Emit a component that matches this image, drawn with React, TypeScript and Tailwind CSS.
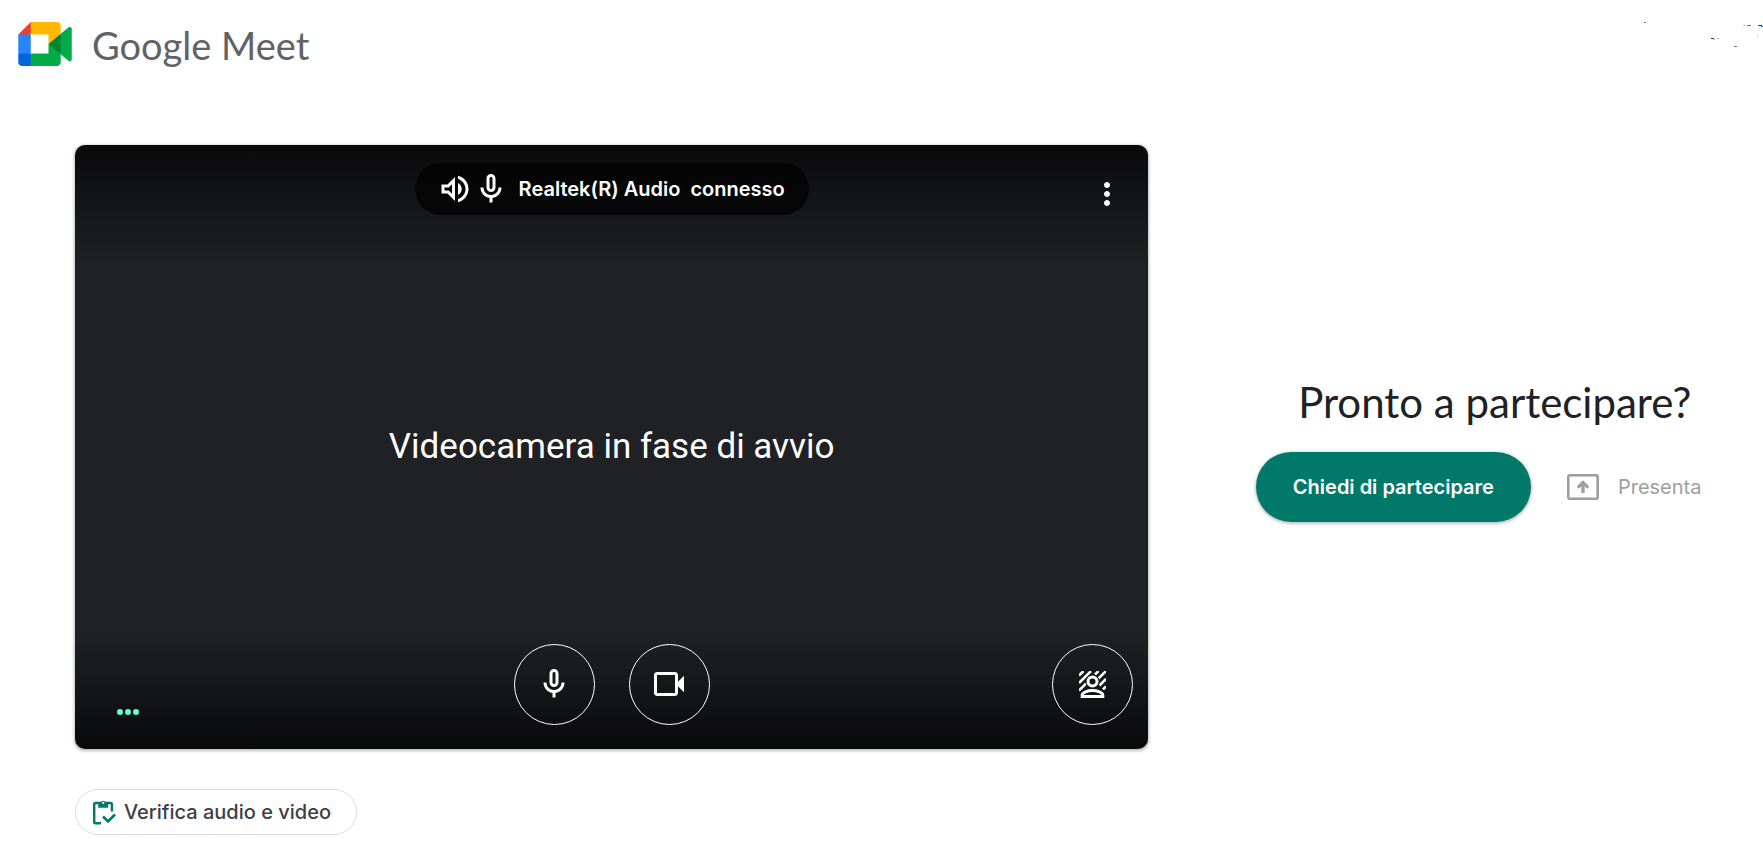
import React from "react";

const MIC =
  "M12 14c1.66 0 3-1.34 3-3V5c0-1.66-1.34-3-3-3S9 3.34 9 5v6c0 1.66 1.34 3 3 3zm-1-9c0-.55.45-1 1-1s1 .45 1 1v6c0 .55-.45 1-1 1s-1-.45-1-1V5zm6 6c0 2.76-2.24 5-5 5s-5-2.24-5-5H5c0 3.53 2.61 6.43 6 6.92V21h2v-3.08c3.39-.49 6-3.39 6-6.92h-2z";
const SPEAKER =
  "M3 9v6h4l5 5V4L7 9H3zm7-.17v6.34L7.83 13H5v-2h2.83L10 8.83zM16.5 12c0-1.77-1.02-3.29-2.5-4.03v8.05c1.48-.73 2.5-2.25 2.5-4.02zM14 3.23v2.06c2.89.86 5 3.54 5 6.71s-2.11 5.85-5 6.71v2.06c4.01-.91 7-4.49 7-8.77s-2.99-7.86-7-8.77z";
const CAMERA =
  "M18 10.48V6c0-1.1-.9-2-2-2H4c-1.1 0-2 .9-2 2v12c0 1.1.9 2 2 2h12c1.1 0 2-.9 2-2v-4.48l4 3.98v-11l-4 3.98zM16 18H4V6h12v12z";
const MORE =
  "M12 8c1.1 0 2-.9 2-2s-.9-2-2-2-2 .9-2 2 .9 2 2 2zm0 2c-1.1 0-2 .9-2 2s.9 2 2 2 2-.9 2-2-.9-2-2-2zm0 6c-1.1 0-2 .9-2 2s.9 2 2 2 2-.9 2-2-.9-2-2-2z";

function Icon({ d }: { d: string }) {
  return (
    <svg viewBox="0 0 24 24" className="size-9 shrink-0 fill-current" aria-hidden="true">
      <path d={d} />
    </svg>
  );
}

function MeetLogo() {
  return (
    <svg viewBox="0 0 87.5 72" className="h-11 w-[54px] shrink-0" aria-hidden="true">
      <path fill="#00832d" d="M49.5 36l8.53 9.75 11.47 7.33 2-17.02-2-16.64-11.69 6.44z" />
      <path fill="#0066da" d="M0 51.5V66c0 3.315 2.685 6 6 6h14.5l3-10.96-3-9.54-9.95-3z" />
      <path fill="#e94235" d="M20.5 0L0 20.5l10.55 3 9.95-3 2.95-9.41z" />
      <path fill="#2684fc" d="M20.5 20.5H0v31h20.5z" />
      <path
        fill="#00ac47"
        d="M82.6 8.68L69.5 19.42v33.66l13.16 10.79c1.97 1.54 4.85.135 4.85-2.37V11c0-2.535-2.945-3.925-4.91-2.32zM49.5 36v15.5h-29V72h43c3.315 0 6-2.685 6-6V53.08z"
      />
      <path fill="#ffba00" d="M63.5 0h-43v20.5h29V36l20-16.57V6c0-3.315-2.685-6-6-6z" />
    </svg>
  );
}

function BackgroundIcon() {
  return (
    <svg viewBox="0 0 27 27" className="size-[27px]" fill="none" stroke="currentColor" aria-hidden="true">
      <path d="M0 4.5L4.5 0M0 12L12 0M0 19.5L7 12.500M16 3.500L19.500 0M19.500 7.500L27 0M20.500 14.500L27 8M24 18.500L27 15.500" strokeWidth="2.500" />
      <circle cx="13.500" cy="10.500" r="7" fill="#141517" stroke="none" />
      <path d="M0 27v-3.500c0-4.500 7-7 13.500-7s13.500 2.500 13.500 7V27z" fill="#141517" stroke="none" />
      <circle cx="13.500" cy="10.500" r="4.500" strokeWidth="3" />
      <path d="M3.200 25.500v-1.500c0-2.600 5.500-4.400 10.300-4.400s10.300 1.800 10.300 4.400v1.500z" strokeWidth="3" />
    </svg>
  );
}

function ClipboardCheck() {
  return (
    <svg viewBox="0 0 24 26" className="h-[26px] w-6 shrink-0" fill="none" stroke="#00796b" aria-hidden="true">
      <path d="M9 24.200H3.500c-.9 0-1.300-.5-1.300-1.300V5.400c0-.9.500-1.400 1.300-1.400h15c.9 0 1.400.5 1.400 1.400V12.500" strokeWidth="2.400" />
      <path d="M6.200 8.800V3.600h2.300a2.900 2.900 0 0 1 5.400 0h2.300v5.200z" fill="#00796b" stroke="none" />
      <circle cx="11.200" cy="3.800" r="1.100" fill="#fff" stroke="none" />
      <path d="M11 17.500l5 5 7-7" strokeWidth="2.600" />
    </svg>
  );
}

function PresentIcon() {
  return (
    <svg viewBox="0 0 32 26" className="h-[26px] w-8 shrink-0" fill="none" stroke="currentColor" aria-hidden="true">
      <rect x="1.300" y="1.300" width="29.400" height="23.400" rx="1.800" strokeWidth="2.600" />
      <path d="M16 19v-8.500" strokeWidth="3.400" />
      <path d="M10.800 13.600L16 8.400l5.200 5.200" strokeWidth="3" />
    </svg>
  );
}

function RoundButton({ label, children }: { label: string; children: React.ReactNode }) {
  return (
    <button
      type="button"
      aria-label={label}
      className="flex size-[81px] items-center justify-center rounded-full border border-white text-white"
    >
      {children}
    </button>
  );
}

export default function App() {
  return (
    <div className="min-h-screen overflow-x-hidden bg-white font-['Inter',sans-serif] text-[#202124]">
      <header className="flex items-start justify-between pt-[22px] pl-[18px]">
        <div className="flex h-12 items-start gap-5">
          <MeetLogo />
          <span className="font-['Lato',sans-serif] text-[38px] leading-[46px] text-[#5f6368]">Google Meet</span>
        </div>
        <svg viewBox="0 0 123 28" className="h-7 w-[123px]" shapeRendering="crispEdges" aria-hidden="true">
          <path fill="#777" d="M4 0h2v1h-2zM107 3h4v1h-4zM94 24h3v1h-3z" />
          <path fill="#444" d="M71 16h3v1h-3zM118 3h4v1h-4z" />
          <path fill="#bbb" d="M73 17h2v1h-2zM77 16h2v1h-2zM103 3h2v1h-2zM117 13h1v1h-1z" />
          <path fill="#3b6f9c" d="M121 4h2v1h-2z" />
        </svg>
      </header>

      <main className="grid grid-cols-[2fr_1fr] gap-x-[78px] pt-[75px] pl-[75px]">
        <section
          aria-label="Anteprima video"
          className="grid aspect-video grid-rows-[1fr_auto_1fr] rounded-[10px] bg-[#202124] bg-[linear-gradient(to_bottom,rgba(0,0,0,0.7),transparent_20%,transparent_81%,rgba(0,0,0,0.72))] shadow-[0_1px_3px_1px_rgba(60,64,67,0.35)]"
        >
          <div className="grid grid-cols-[1fr_auto_1fr] items-start pt-[18px]">
            <div className="col-start-2 flex h-[52px] items-center rounded-full bg-black/70 pr-6 pl-[22px] text-white">
              <Icon d={SPEAKER} />
              <Icon d={MIC} />
              <p className="ml-[10px] flex gap-[10px] text-xl font-semibold">
                <span>Realtek(R) Audio</span>
                <span>connesso</span>
              </p>
            </div>
            <button type="button" aria-label="Altre opzioni" className="mt-[13px] mr-[23px] justify-self-end text-white">
              <Icon d={MORE} />
            </button>
          </div>

          <p className="text-center font-['Roboto',sans-serif] text-[35px] leading-10 text-white">
            Videocamera in fase di avvio
          </p>

          <div className="grid grid-cols-[1fr_auto_1fr] items-end pb-6">
            <div className="mb-[10px] ml-[42px] flex gap-[2px]" aria-label="Livello audio">
              <span className="size-[6px] rounded-full bg-[#64ffda]" />
              <span className="size-[6px] rounded-full bg-[#64ffda]" />
              <span className="size-[6px] rounded-full bg-[#64ffda]" />
            </div>
            <div className="flex gap-[34px]">
              <RoundButton label="Disattiva microfono">
                <Icon d={MIC} />
              </RoundButton>
              <RoundButton label="Disattiva videocamera">
                <Icon d={CAMERA} />
              </RoundButton>
            </div>
            <div className="mr-[15px] justify-self-end">
              <RoundButton label="Applica effetti visivi">
                <BackgroundIcon />
              </RoundButton>
            </div>
          </div>
        </section>

        <section className="flex flex-col items-center justify-center gap-[26px] pt-[6px]">
          <h1 className="font-['Lato',sans-serif] text-[42px] leading-[48px]">Pronto a partecipare?</h1>
          <div className="flex items-center gap-[36px]">
            <button
              type="button"
              className="h-[70px] rounded-full bg-[#00796b] px-[37px] text-xl font-semibold whitespace-nowrap text-white shadow-[0_1px_3px_1px_rgba(60,64,67,0.3)]"
            >
              Chiedi di partecipare
            </button>
            <button type="button" className="flex items-center gap-[19px] pr-8 text-xl text-[#9e9e9e]">
              <PresentIcon />
              Presenta
            </button>
          </div>
        </section>

        <div className="pt-10 pb-2">
          <button
            type="button"
            className="flex h-[46px] items-center gap-2 rounded-full border border-[#dadce0] pr-[25px] pl-4 text-xl font-medium text-[#3c4043]"
          >
            <ClipboardCheck />
            Verifica audio e video
          </button>
        </div>
      </main>
    </div>
  );
}
